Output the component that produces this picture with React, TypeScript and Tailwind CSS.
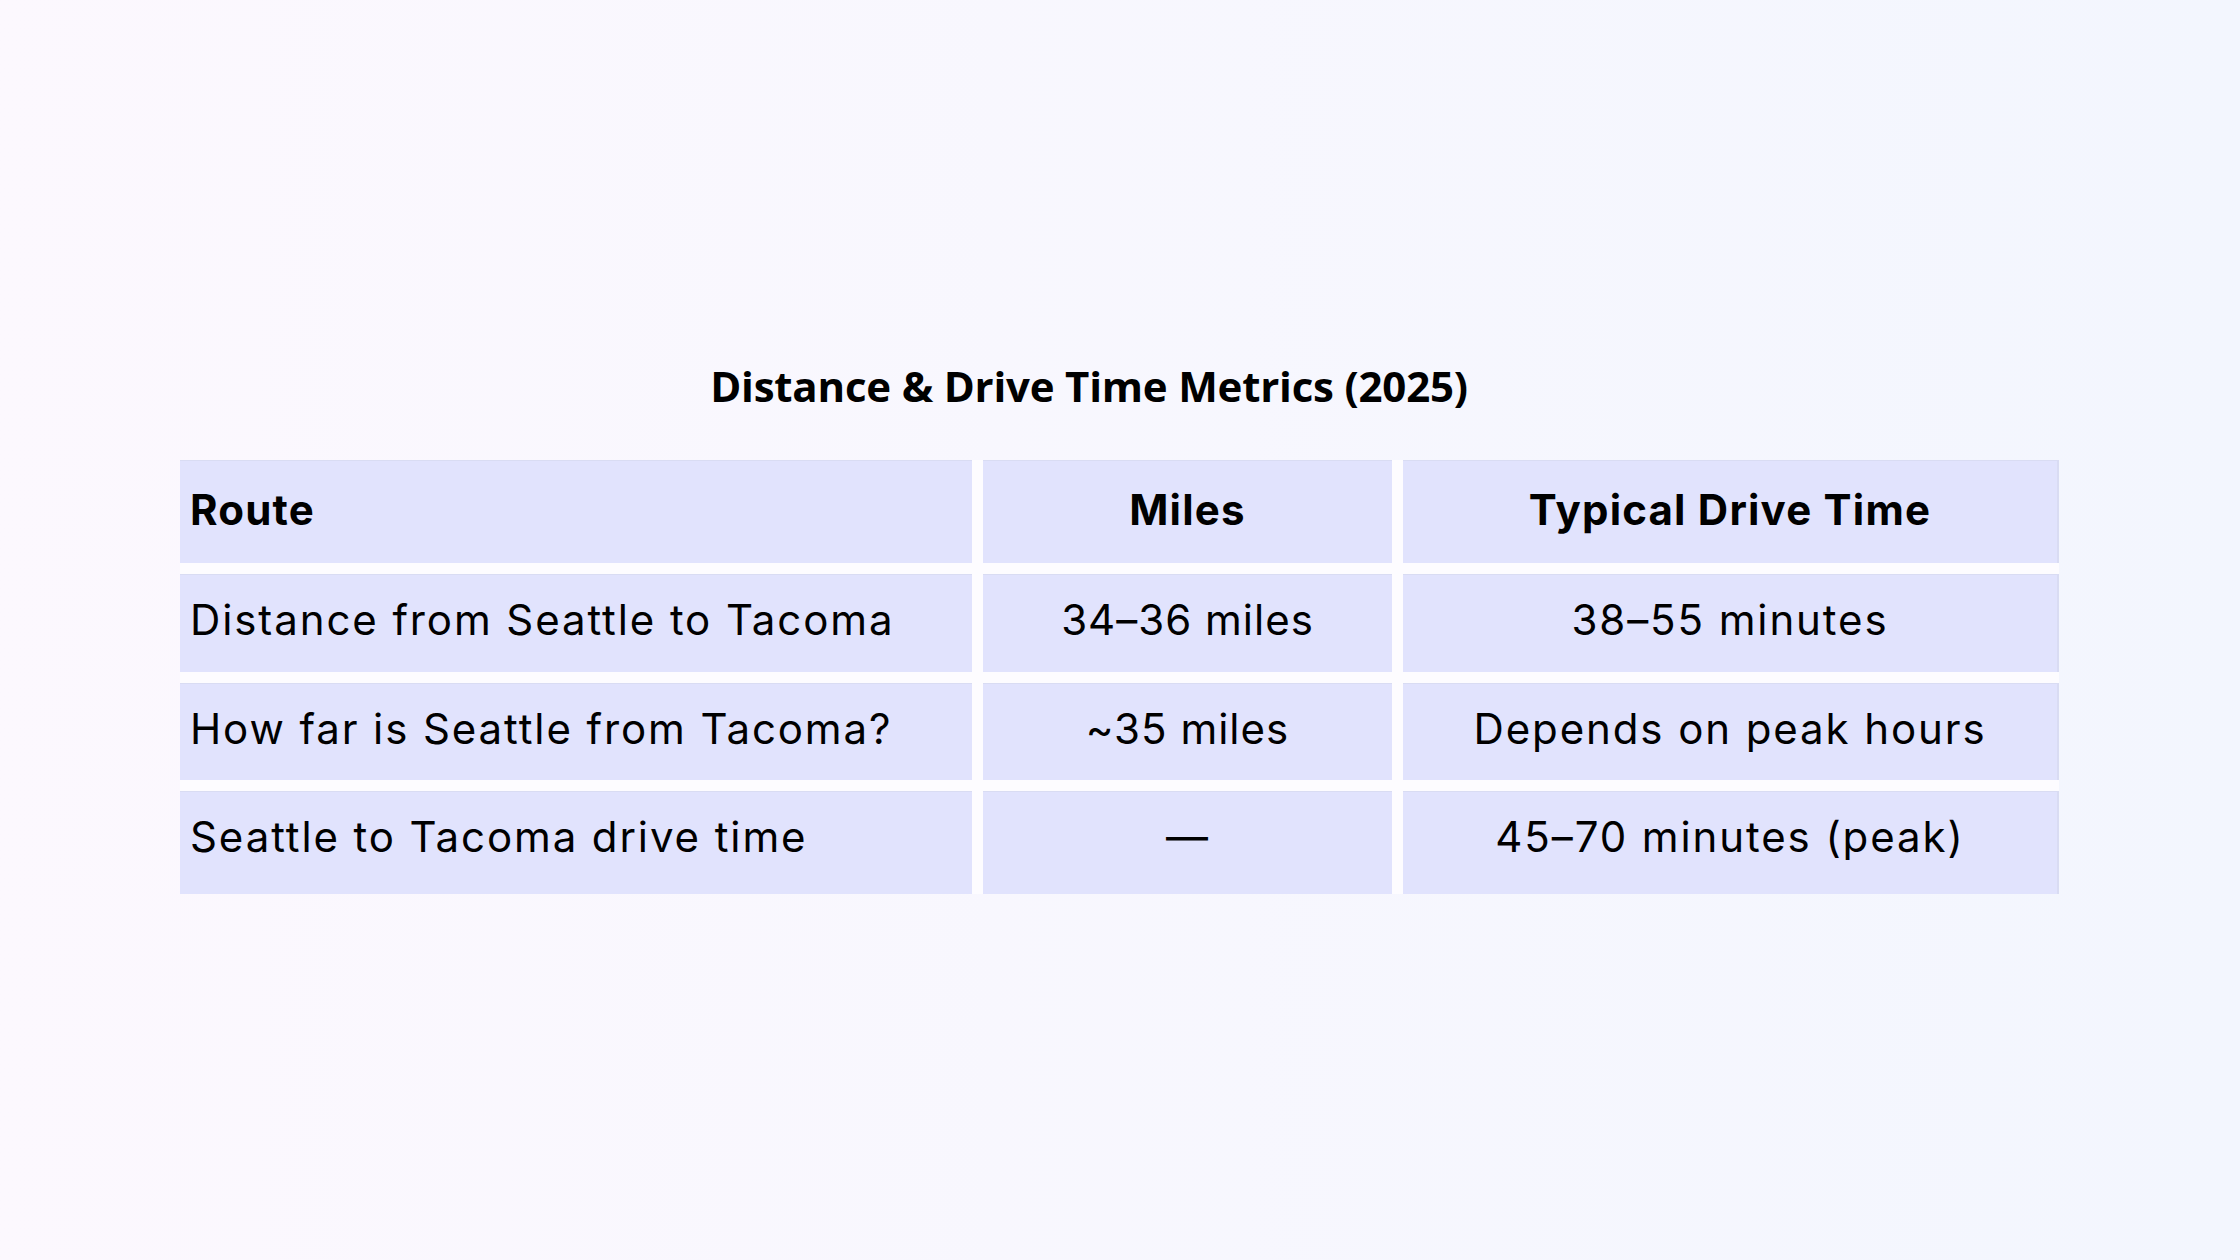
const rows = [
  { route: "Distance from Seattle to Tacoma", miles: "34–36 miles", time: "38–55 minutes", h: "h-[98px]", pb: "pb-[8px]" },
  { route: "How far is Seattle from Tacoma?", miles: "~35 miles", time: "Depends on peak hours", h: "h-[97px]", pb: "pb-[8px]" },
  { route: "Seattle to Tacoma drive time", miles: "—", time: "45–70 minutes (peak)", h: "h-[103px]", pb: "pb-[13px]" },
];

const cell = "flex items-center bg-[#e1e3fd] border-t border-[#d9dcf3] px-[10px]";
const head = "text-[42px] font-bold tracking-[1.2px] pb-[5px]";
const body = "text-[42px] tracking-[1.9px]";

export default function App() {
  return (
    <div className="min-h-[1260px] w-full bg-gradient-to-r from-[#fcf8fe] to-[#f3f6fe] font-['Inter',sans-serif] text-black">
      <div className="pt-[362px] pl-[180px]">
        <h1 className="w-[1818px] text-center font-['Open_Sans',sans-serif] text-[42px] font-bold leading-[48px] tracking-[-0.2px]">
          Distance &amp; Drive Time Metrics (2025)
        </h1>

        <div className="mt-[50px] grid w-[1879px] grid-cols-[792px_409px_656px] gap-[11px] bg-[#fdfcff]">
          <div className={`${cell} ${head} h-[103px]`}>Route</div>
          <div className={`${cell} ${head} justify-center`}>Miles</div>
          <div className={`${cell} ${head} justify-center border-r-2`}>Typical Drive Time</div>

          {rows.map((r, i) => (
            <>
              <div key={`a${i}`} className={`${cell} ${body} ${r.h} ${r.pb}`}>{r.route}</div>
              <div key={`b${i}`} className={`${cell} ${body} ${r.pb} justify-center tracking-[1px]`}>{r.miles}</div>
              <div key={`c${i}`} className={`${cell} ${body} ${r.pb} justify-center border-r-2`}>{r.time}</div>
            </>
          ))}
        </div>
      </div>
    </div>
  );
}
